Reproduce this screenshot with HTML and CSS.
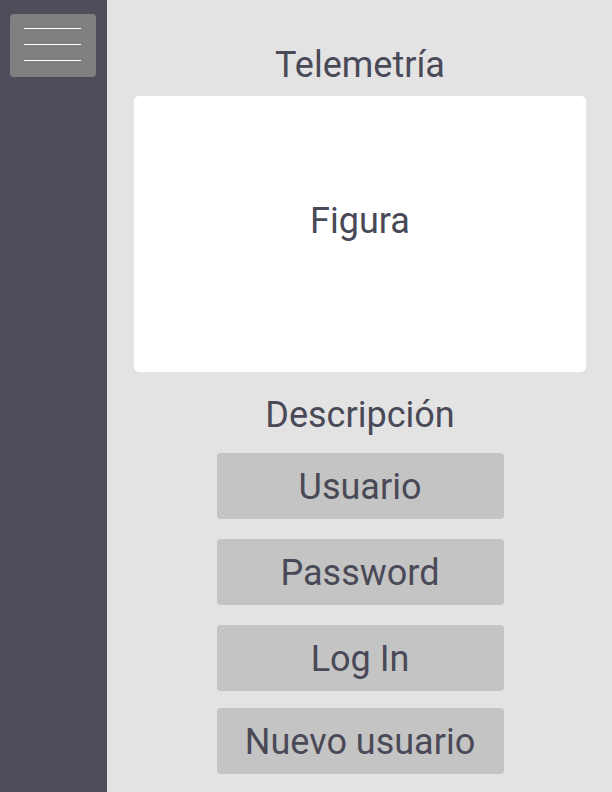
FILE: index.html
```html
<!DOCTYPE html>
<html lang="es">
<head>
<meta charset="utf-8">
<title>Telemetría</title>
<link rel="stylesheet" href="styles.css">
</head>
<body>
<div class="app">
  <aside class="sidebar">
    <button class="menu-btn" aria-label="Menú">
      <span class="bar"></span>
      <span class="bar"></span>
      <span class="bar"></span>
    </button>
  </aside>
  <main class="main">
    <h1 class="title">Telemetría</h1>
    <div class="figure">Figura</div>
    <p class="desc">Descripción</p>
    <div class="actions">
      <div class="btn">Usuario</div>
      <div class="btn">Password</div>
      <div class="btn">Log In</div>
      <div class="btn btn-last">Nuevo usuario</div>
    </div>
  </main>
</div>
</body>
</html>
```
FILE: styles.css
```css
* { box-sizing: border-box; }
html, body { margin: 0; padding: 0; height: 100%; }
body {
  font-family: Roboto, "Liberation Sans", sans-serif;
  color: #4a4957;
  background: #e3e3e3;
}
.app {
  display: flex;
  height: 792px;
  overflow: hidden;
}
.sidebar {
  width: 107px;
  flex: none;
  background: #4f4d5a;
  padding: 14px 0 0 10px;
}
.menu-btn {
  width: 86px;
  height: 63px;
  background: #808080;
  border: none;
  border-radius: 4px;
  padding: 14px 0 0 14px;
  display: flex;
  flex-direction: column;
  gap: 15px;
  align-items: flex-start;
}
.bar {
  display: block;
  width: 57px;
  height: 1px;
  background: #ffffff;
}
.main {
  flex: 1;
  display: flex;
  flex-direction: column;
  align-items: center;
  padding: 45px 26px 0 27px;
}
.title {
  margin: 0;
  font-weight: 400;
  font-size: 36px;
  line-height: 40px;
  height: 40px;
}
.figure {
  margin-top: 11px;
  width: 100%;
  height: 276px;
  background: #ffffff;
  border-radius: 5px;
  display: flex;
  align-items: flex-start;
  justify-content: center;
  padding-top: 105px;
  font-size: 36px;
  line-height: 40px;
}
.desc {
  margin: 23px 0 0;
  font-size: 36px;
  line-height: 40px;
}
.actions {
  margin-top: 18px;
  display: flex;
  flex-direction: column;
  gap: 20px;
}
.btn {
  width: 287px;
  height: 66px;
  background: #c4c4c4;
  border-radius: 4px;
  display: flex;
  align-items: center;
  justify-content: center;
  padding-top: 2px;
  font-size: 36px;
  line-height: 40px;
}
.btn-last { margin-top: -3px; }
```
